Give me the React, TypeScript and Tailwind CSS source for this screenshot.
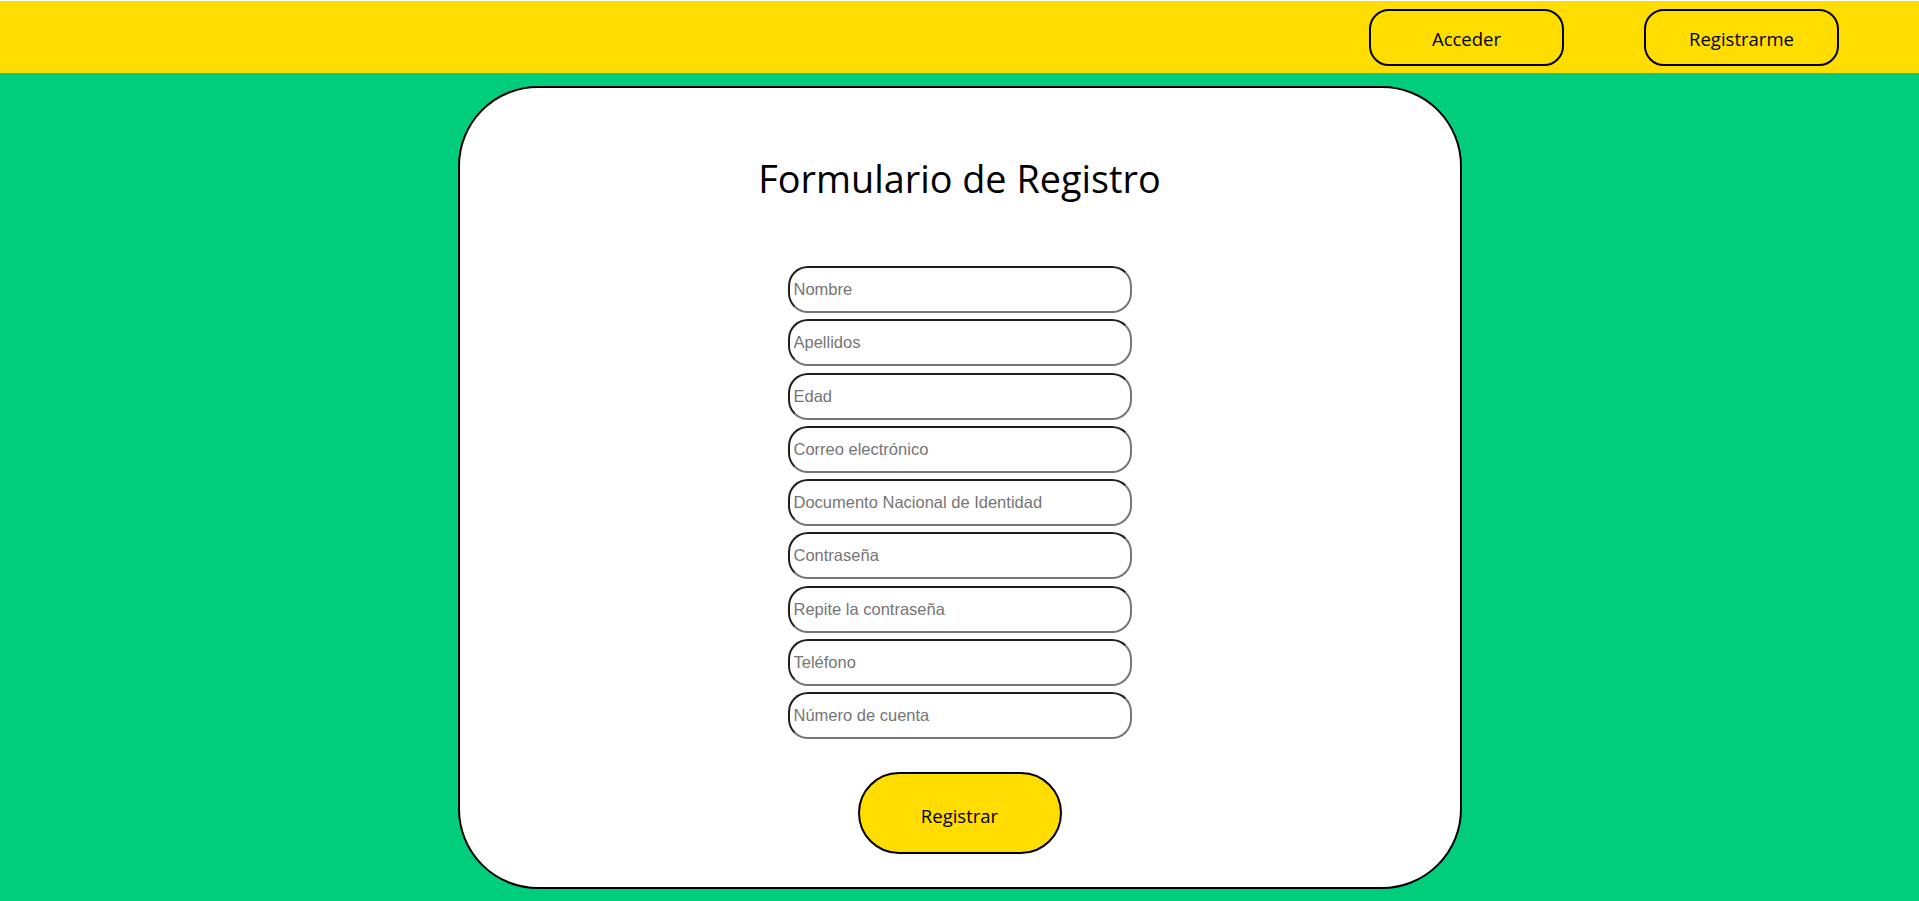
const fields = [
  'Nombre',
  'Apellidos',
  'Edad',
  'Correo electrónico',
  'Documento Nacional de Identidad',
  'Contraseña',
  'Repite la contraseña',
  'Teléfono',
  'Número de cuenta',
]

function Header() {
  return (
    <header className="flex h-[73px] items-center justify-end gap-[80px] border-t border-white bg-[#ffdd00] pr-[80px]">
      <button className="h-[57px] w-[195px] rounded-[20px] border-2 border-black pt-[4px] text-[18.5px] text-black">
        Acceder
      </button>
      <button className="h-[57px] w-[195px] rounded-[20px] border-2 border-black pt-[4px] text-[18.5px] text-black">
        Registrarme
      </button>
    </header>
  )
}

export default function App() {
  return (
    <div className="min-h-screen bg-[#00ce7c] font-['Open_Sans',sans-serif]">
      <Header />
      <main className="flex justify-center pt-[13px] pb-[12px]">
        <section className="flex w-[1004px] flex-col items-center rounded-[80px] border-2 border-black bg-white pb-[33px]">
          <h1 className="mt-[66px] text-[37.8px] leading-[50px] text-black">Formulario de Registro</h1>

          <form className="mt-[62px] flex flex-col items-center" onSubmit={(e) => e.preventDefault()}>
            <div className="flex flex-col gap-[6.3px]">
              {fields.map((label) => (
                <input
                  key={label}
                  type="text"
                  placeholder={label}
                  className="h-[47px] w-[344px] rounded-[20px] border-2 border-t-[#1e1e1e] border-l-[#1e1e1e] border-r-[#767676] border-b-[#767676] bg-white pl-[4px] pr-[2px] font-['Liberation_Sans',Arial,sans-serif] text-[16.5px] text-black outline-none placeholder:text-[#757575]"
                />
              ))}
            </div>

            <button
              type="submit"
              className="mt-[33px] h-[82px] w-[204px] rounded-full border-2 border-black bg-[#ffdd00] pt-[4px] text-[18.5px] text-black"
            >
              Registrar
            </button>
          </form>
        </section>
      </main>
    </div>
  )
}
